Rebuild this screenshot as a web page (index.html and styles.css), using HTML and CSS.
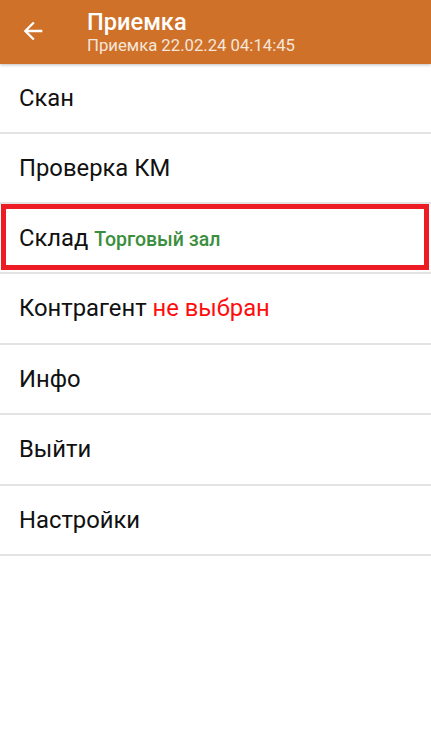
FILE: index.html
```html
<!DOCTYPE html>
<html lang="ru">
<head>
  <meta charset="UTF-8">
  <meta name="viewport" content="width=device-width, initial-scale=1.0">
  <title>Приемка</title>
  <link rel="stylesheet" href="styles.css">
</head>
<body>
  <header class="toolbar">
    <svg class="back" viewBox="0 0 24 24" width="28" height="28">
      <path d="M20 11H7.83l5.59-5.59L12 4l-8 8 8 8 1.41-1.41L7.83 13H20v-2z" fill="#fff"/>
    </svg>
    <div class="titles">
      <div class="title">Приемка</div>
      <div class="subtitle">Приемка 22.02.24 04:14:45</div>
    </div>
  </header>

  <ul class="menu">
    <li class="item">Скан</li>
    <li class="item">Проверка КМ</li>
    <li class="item marked">Склад <span class="ok">Торговый зал</span></li>
    <li class="item">Контрагент <span class="bad">не выбран</span></li>
    <li class="item">Инфо</li>
    <li class="item">Выйти</li>
    <li class="item">Настройки</li>
  </ul>
</body>
</html>
```

FILE: styles.css
```css
body {
  margin: 0;
  padding: 0;
  background: #fff;
  font-family: Roboto, "Noto Sans", sans-serif;
  color: #111;
}

.toolbar {
  height: 64px;
  background: #cf7129;
  display: flex;
  align-items: center;
  box-shadow: 0 1px 3px rgba(0, 0, 0, 0.25);
  position: relative;
  z-index: 1;
}

.back {
  margin-left: 19px;
  margin-right: 40px;
  margin-top: -2px;
}

.titles {
  color: #fff;
  margin-top: 1px;
}

.title {
  font-size: 23.6px;
  font-weight: 500;
  line-height: 26px;
}

.subtitle {
  font-size: 16.7px;
  line-height: 21px;
  color: #f6e6da;
}

.menu {
  list-style: none;
  margin: 0;
  padding: 0;
}

.item {
  height: 68px;
  border-bottom: 2px solid #e3e3e3;
  display: flex;
  align-items: center;
  padding-left: 19px;
  font-size: 23.8px;
  position: relative;
  white-space: pre;
}

.item:nth-child(n+4) {
  height: 68.5px;
}

.ok {
  color: #3a8e3e;
  font-size: 19.5px;
  font-weight: 500;
  margin-top: 2px;
}

.bad {
  color: #ff0d0d;
}

.marked::after {
  content: "";
  position: absolute;
  left: 1px;
  right: 2px;
  top: 0;
  bottom: 2px;
  border: 5px solid #ed1c24;
}
```
